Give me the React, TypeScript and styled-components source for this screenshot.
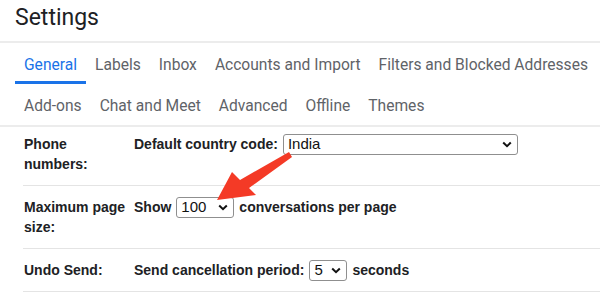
import React from "react";
import styled, { createGlobalStyle } from "styled-components";

const GlobalStyle = createGlobalStyle`
  body {
    margin: 0;
    background: #ffffff;
    font-family: "Liberation Sans", Arial, sans-serif;
  }
`;

const Page = styled.div`
  position: relative;
  width: 600px;
  height: 292px;
  overflow: hidden;
  background: #ffffff;
`;

const Header = styled.div`
  padding: 4px 0 10px 15px;
  border-bottom: 2px solid #ececec;
`;

const Title = styled.h1`
  margin: 0;
  font-family: Roboto, "Noto Sans", sans-serif;
  font-weight: 400;
  font-size: 23px;
  line-height: 27px;
  color: #202124;
`;

const Tabs = styled.div`
  padding-left: 15px;
  border-bottom: 2px solid #ececec;
`;

const TabRow = styled.div`
  display: flex;
`;

const Tab = styled.div<{ $active?: boolean }>`
  padding: 12px 9px 6px;
  font-family: Roboto, "Noto Sans", sans-serif;
  font-size: 15.6px;
  line-height: 20px;
  white-space: nowrap;
  color: ${(p) => (p.$active ? "#1a73e8" : "#5f6368")};
  border-bottom: 3px solid ${(p) => (p.$active ? "#1a73e8" : "transparent")};
`;

const Table = styled.div`
  padding-left: 23px;
`;

const Row = styled.div<{ $top: number }>`
  display: grid;
  grid-template-columns: 110px 1fr;
  padding: ${(p) => p.$top}px 0 11px 1px;
  border-bottom: 1px solid #e4e4e4;
  font-size: 14px;
  line-height: 20px;
  font-weight: 700;
  color: #202124;
`;

const Label = styled.div`
  padding-right: 4px;
`;

const Field = styled.div`
  display: flex;
  align-items: center;
  gap: 4px;
  height: 20px;
  white-space: nowrap;
`;

const SelectBox = styled.div<{ $width: number }>`
  display: flex;
  align-items: center;
  justify-content: space-between;
  box-sizing: border-box;
  width: ${(p) => p.$width}px;
  height: 21px;
  padding: 0 5px 0 4px;
  margin: 0 1px;
  border: 1px solid #8f8f8f;
  border-radius: 3px;
  background: #ffffff;
  font-weight: 400;
  font-size: 15px;
  color: #111111;
`;

const Overlay = styled.svg`
  position: absolute;
  left: 0;
  top: 0;
  pointer-events: none;
`;

function Select({ value, width }: { value: string; width: number }) {
  return (
    <SelectBox $width={width}>
      <span>{value}</span>
      <svg width="10" height="7" viewBox="0 0 10 7">
        <path d="M1.2 1.5 L5 5.2 L8.8 1.5" fill="none" stroke="#111" strokeWidth="2" />
      </svg>
    </SelectBox>
  );
}

const row1 = ["General", "Labels", "Inbox", "Accounts and Import", "Filters and Blocked Addresses"];
const row2 = ["Add-ons", "Chat and Meet", "Advanced", "Offline", "Themes"];

export default function App() {
  return (
    <Page>
      <GlobalStyle />
      <Header>
        <Title>Settings</Title>
      </Header>
      <Tabs>
        <TabRow>
          {row1.map((t) => (
            <Tab key={t} $active={t === "General"}>
              {t}
            </Tab>
          ))}
        </TabRow>
        <TabRow>
          {row2.map((t) => (
            <Tab key={t}>{t}</Tab>
          ))}
        </TabRow>
      </Tabs>
      <Table>
        <Row $top={7}>
          <Label>
            Phone
            <br />
            numbers:
          </Label>
          <Field>
            Default country code:
            <Select value="India" width={235} />
          </Field>
        </Row>
        <Row $top={11}>
          <Label>
            Maximum page
            <br />
            size:
          </Label>
          <Field>
            Show
            <Select value="100" width={58} />
            conversations per page
          </Field>
        </Row>
        <Row $top={11}>
          <Label>Undo Send:</Label>
          <Field>
            Send cancellation period:
            <Select value="5" width={38} />
            seconds
          </Field>
        </Row>
      </Table>
      <Overlay width="600" height="292" viewBox="0 0 600 292">
        <polygon
          points="217,200 232,172 240,180 289,152 292,157 249,188 256,195"
          fill="#f43a26"
        />
      </Overlay>
    </Page>
  );
}
